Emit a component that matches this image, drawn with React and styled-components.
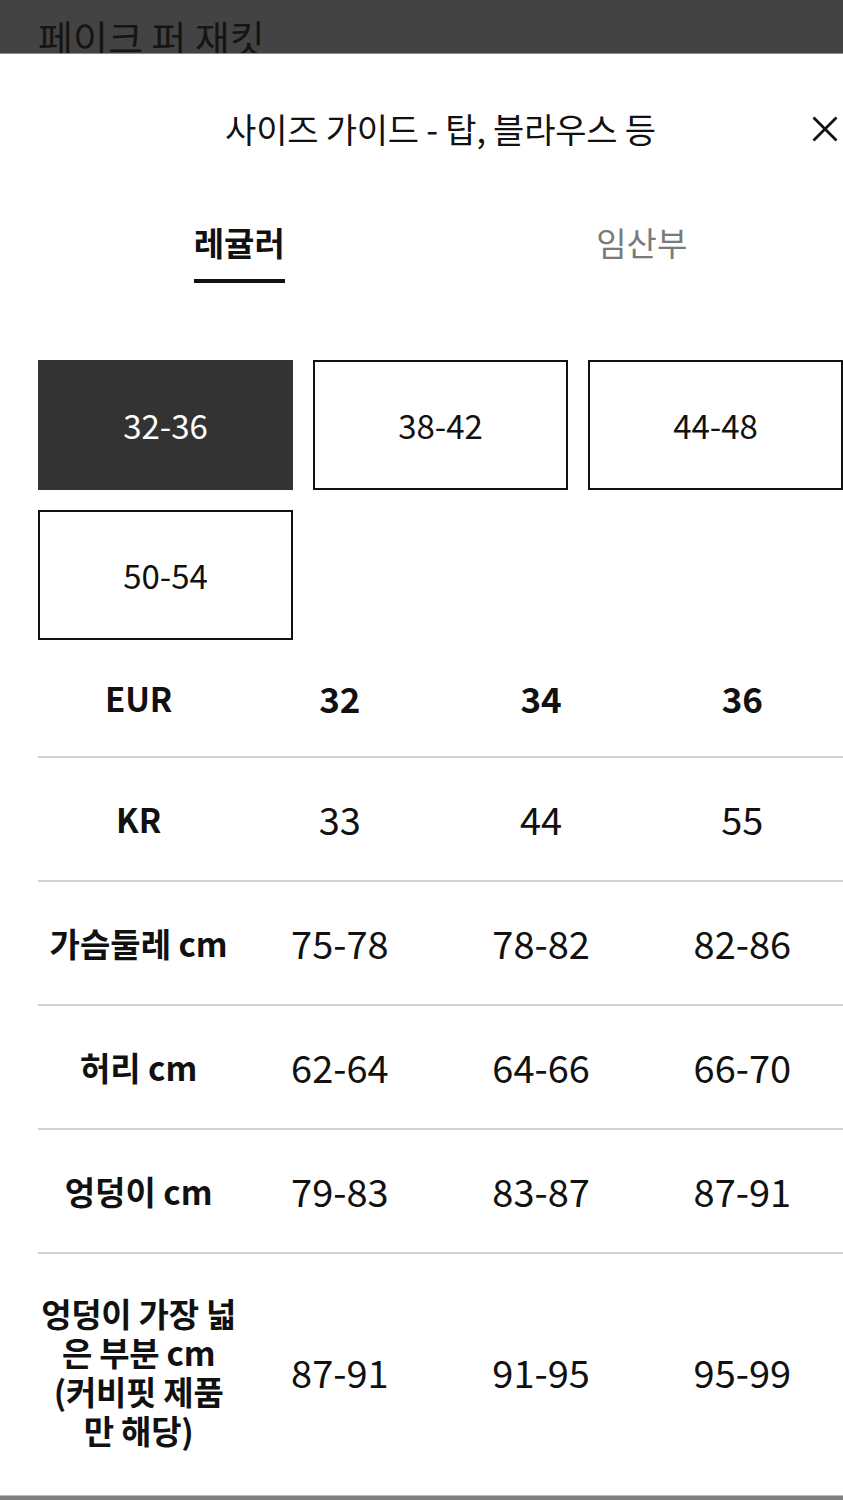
import React, { useState } from 'react';
import styled, { createGlobalStyle } from 'styled-components';

const GlobalStyle = createGlobalStyle`
    body {
        margin: 0;
        background: #ffffff;
        font-family: "Noto Sans CJK KR", "Noto Sans", sans-serif;
        color: #111111;
    }
`;

const sizeRanges = ['32-36', '38-42', '44-48', '50-54'];

const rows = [
    { label: 'EUR', values: ['32', '34', '36'], head: true },
    { label: 'KR', values: ['33', '44', '55'] },
    { label: '가슴둘레 cm', values: ['75-78', '78-82', '82-86'] },
    { label: '허리 cm', values: ['62-64', '64-66', '66-70'] },
    { label: '엉덩이 cm', values: ['79-83', '83-87', '87-91'] },
    {
        label: ['엉덩이 가장 넓', '은 부분 cm', '(커비핏 제품', '만 해당)'],
        values: ['87-91', '91-95', '95-99'],
        tall: true,
    },
];

function CloseIcon() {
    return (
        <svg width="26" height="26" viewBox="0 0 26 26" fill="none">
            <path d="M1.5 1.5 24.5 24.5M24.5 1.5 1.5 24.5" stroke="#111" strokeWidth="2.8" />
        </svg>
    );
}

function App() {
    const [tab, setTab] = useState('regular');
    const [range, setRange] = useState('32-36');

    return (
        <Page>
            <GlobalStyle />
            <PageHeader>
                <PageTitle>페이크 퍼 재킷</PageTitle>
            </PageHeader>
            <Modal>
                <TitleBar>
                    <ModalTitle>사이즈 가이드 - 탑, 블라우스 등</ModalTitle>
                    <CloseButton aria-label="닫기">
                        <CloseIcon />
                    </CloseButton>
                </TitleBar>
                <Tabs>
                    <Tab onClick={() => setTab('regular')}>
                        <TabLabel $active={tab === 'regular'}>레귤러</TabLabel>
                    </Tab>
                    <Tab onClick={() => setTab('maternity')}>
                        <TabLabel $active={tab === 'maternity'}>임산부</TabLabel>
                    </Tab>
                </Tabs>
                <RangeGrid>
                    {sizeRanges.map((r) => (
                        <RangeButton key={r} $selected={range === r} onClick={() => setRange(r)}>
                            {r}
                        </RangeButton>
                    ))}
                </RangeGrid>
                <SizeTable>
                    {rows.map((row, i) => (
                        <TableRow key={i} $first={i === 0} $tall={row.tall}>
                            <LabelCell $tall={row.tall}>
                                {Array.isArray(row.label)
                                    ? row.label.map((line, j) => (
                                          <LabelLine key={j}>{line}</LabelLine>
                                      ))
                                    : row.label}
                            </LabelCell>
                            {row.values.map((v) => (
                                <ValueCell key={v} $bold={row.head}>
                                    {v}
                                </ValueCell>
                            ))}
                        </TableRow>
                    ))}
                </SizeTable>
                <BottomEdge />
            </Modal>
        </Page>
    );
}

export default App;



const Page = styled.div`
    width: 843px;
    overflow: hidden;
`;

const PageHeader = styled.div`
    height: 53px;
    background: #434343;
    overflow: hidden;
    padding: 18px 0 0 38px;
    box-sizing: border-box;
`;

const PageTitle = styled.div`
    font-size: 38px;
    line-height: 38px;
    color: #151515;
    white-space: nowrap;
`;

const Modal = styled.div`
    background: #ffffff;
    border-top: 1px solid #8a8a8a;
`;

const TitleBar = styled.div`
    position: relative;
    height: 149px;
    display: flex;
    align-items: center;
    justify-content: center;
    padding-left: 38px;
`;

const ModalTitle = styled.h2`
    margin: 0;
    font-size: 34px;
    font-weight: 400;
    color: #111;
    letter-spacing: -0.2px;
`;

const CloseButton = styled.button`
    position: absolute;
    right: 5px;
    top: 50%;
    transform: translateY(-50%);
    padding: 0;
    border: none;
    background: none;
    display: flex;
    cursor: pointer;
`;

const Tabs = styled.div`
    display: grid;
    grid-template-columns: 1fr 1fr;
    padding-left: 38px;
`;

const Tab = styled.div`
    display: flex;
    justify-content: center;
    padding-top: 18px;
    cursor: pointer;
`;

const TabLabel = styled.span`
    font-size: 33px;
    line-height: 42px;
    font-weight: ${(p) => (p.$active ? 700 : 400)};
    color: ${(p) => (p.$active ? '#111' : '#7a7a7a')};
    padding-bottom: 16px;
    border-bottom: 4px solid ${(p) => (p.$active ? '#111' : 'transparent')};
`;

const RangeGrid = styled.div`
    display: grid;
    grid-template-columns: repeat(3, 255px);
    grid-auto-rows: 130px;
    gap: 20px;
    margin: 77px 0 0 38px;
`;

const RangeButton = styled.button`
    box-sizing: border-box;
    border: 2px solid ${(p) => (p.$selected ? '#333' : '#111')};
    background: ${(p) => (p.$selected ? '#333333' : '#ffffff')};
    color: ${(p) => (p.$selected ? '#ffffff' : '#111')};
    font-family: "Noto Sans CJK KR", "Noto Sans", sans-serif;
    font-size: 33px;
    padding: 0;
    cursor: pointer;
`;

const SizeTable = styled.div`
    margin-left: 38px;
`;

const TableRow = styled.div`
    display: grid;
    grid-template-columns: repeat(4, 1fr);
    align-items: center;
    min-height: ${(p) => (p.$first ? '116px' : '122px')};
    padding: ${(p) => (p.$tall ? '40px 0 45px' : '0')};
    border-bottom: ${(p) => (p.$tall ? 'none' : '2px solid #d2d2d2')};
`;

const LabelCell = styled.div`
    text-align: center;
    font-weight: 700;
    font-size: 33px;
    line-height: ${(p) => (p.$tall ? '39px' : '40px')};
    letter-spacing: ${(p) => (p.$tall ? '-0.3px' : '0')};
    white-space: nowrap;
`;

const LabelLine = styled.div`
    height: 39px;
`;

const ValueCell = styled.div`
    text-align: center;
    font-size: ${(p) => (p.$bold ? '35px' : '38px')};
    font-weight: ${(p) => (p.$bold ? 700 : 400)};
    line-height: 40px;
`;

const BottomEdge = styled.div`
    height: 20px;
    border-top: 1px solid #bdbdbd;
    background: #808080;
`;
